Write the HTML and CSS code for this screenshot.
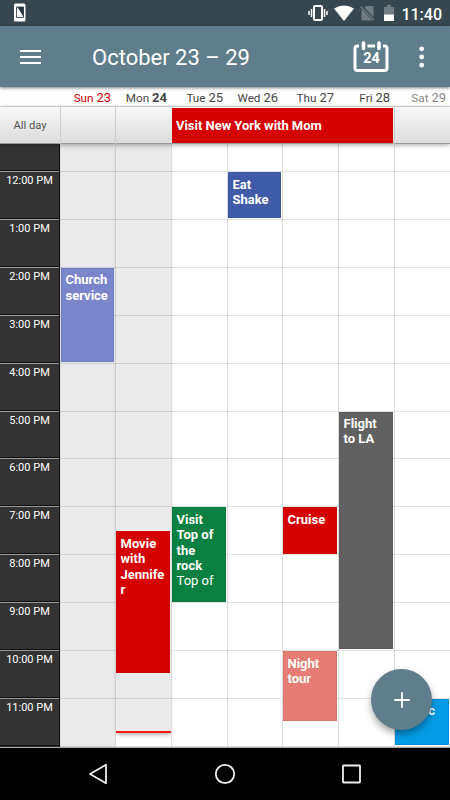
FILE: index.html
```html
<!DOCTYPE html>
<html lang="en">
<head>
    <meta charset="UTF-8">
    <meta name="viewport" content="width=device-width, initial-scale=1.0">
    <title>Calendar</title>
    <link rel="stylesheet" href="styles.css">
</head>
<body>
    <div class="screen">
        <div class="status-bar">
            <svg class="notification" width="14" height="20" viewBox="0 0 14 20">
                <rect x="1" y=".5" width="11.500" height="18" rx="1.500" fill="#fff"/>
                <rect x="3.500" y="4" width="7" height="10.500" fill="#fff" stroke="#26343b" stroke-width=".8"/>
                <path d="M4.500 4h6v10z" fill="#26343b"/>
            </svg>
            <div class="status-icons">
                <svg width="20" height="18" viewBox="0 0 20 18">
                    <rect x="6" y="2" width="8" height="14" rx="1" fill="none" stroke="#fff" stroke-width="2"/>
                    <path d="M3.500 5v8M1 7v4M16.500 5v8M19 7v4" stroke="#fff" stroke-width="1.500"/>
                </svg>
                <svg width="20" height="18" viewBox="0 0 20 18">
                    <path d="M0 4.500Q10 -1.500 20 4.500L10 17z" fill="#fff"/>
                </svg>
                <svg width="15" height="18" viewBox="0 0 15 18">
                    <path d="M6 2h7.500v11L4.500 3.500zM1.500 5L12.500 16.500H1.500z" fill="#727d83"/>
                    <path d="M.5 2.500L14 16" stroke="#727d83" stroke-width="1.300"/>
                </svg>
                <svg width="10" height="18" viewBox="0 0 10 18">
                    <path d="M0 3h3V1h4v2h3v8H0z" fill="#727d83"/>
                    <path d="M0 10.500h10V17H0z" fill="#fff"/>
                </svg>
            </div>
            <span class="clock">11:40</span>
        </div>

        <div class="app-bar">
            <svg class="menu" width="21" height="16" viewBox="0 0 21 16">
                <path d="M0 2h21M0 8h21M0 14h21" stroke="#fff" stroke-width="2.200"/>
            </svg>
            <h1>October 23 – 29</h1>
            <svg class="today" width="36" height="32" viewBox="0 0 36 32">
                <path d="M6 5H4.500Q2 5 2 7.500V27Q2 29.500 4.500 29.500H31.500Q34 29.500 34 27V7.500Q34 5 31.500 5H30" fill="none" stroke="#fff" stroke-width="3"/>
                <path d="M14.500 5h7.500" stroke="#fff" stroke-width="3"/>
                <path d="M10.500 2v5.500M26 2v5.500" stroke="#fff" stroke-width="3.600" stroke-linecap="round"/>
                <text x="18.500" y="21.500" text-anchor="middle" class="today-number">24</text>
            </svg>
            <svg class="more" width="6" height="22" viewBox="0 0 6 22" fill="#fff">
                <circle cx="2.700" cy="2.800" r="2.400"/>
                <circle cx="2.700" cy="11" r="2.400"/>
                <circle cx="2.700" cy="19.200" r="2.400"/>
            </svg>
        </div>

        <div class="week-header columns">
            <span></span>
            <span class="sunday">Sun <b>23</b></span>
            <span class="current">Mon <b>24</b></span>
            <span>Tue <b>25</b></span>
            <span>Wed <b>26</b></span>
            <span>Thu <b>27</b></span>
            <span>Fri <b>28</b></span>
            <span class="saturday">Sat <b>29</b></span>
        </div>

        <div class="all-day columns">
            <div class="all-day-label">All day</div>
            <div class="slot"></div>
            <div class="slot"></div>
            <div class="all-day-event">Visit New York with Mom</div>
            <div class="slot"></div>
        </div>

        <div class="week columns">
            <div class="hours">
                <div class="first"></div>
                <div>12:00 PM</div>
                <div>1:00 PM</div>
                <div>2:00 PM</div>
                <div>3:00 PM</div>
                <div>4:00 PM</div>
                <div>5:00 PM</div>
                <div>6:00 PM</div>
                <div>7:00 PM</div>
                <div>8:00 PM</div>
                <div>9:00 PM</div>
                <div>10:00 PM</div>
                <div>11:00 PM</div>
            </div>

            <div class="lines">
                <div class="first"></div>
                <div></div><div></div><div></div><div></div><div></div><div></div>
                <div></div><div></div><div></div><div></div><div></div><div></div>
            </div>

            <!-- one row per half hour, row 2 starts at noon -->
            <div class="day sun past">
                <div class="event church">Church service</div>
            </div>
            <div class="day mon">
                <div class="now"></div>
                <div class="event movie">Movie with Jennifer</div>
            </div>
            <div class="day tue">
                <div class="event rock">Visit Top of the rock <span>Top of</span></div>
            </div>
            <div class="day wed">
                <div class="event eat">Eat Shake</div>
            </div>
            <div class="day thu">
                <div class="event cruise">Cruise</div>
                <div class="event night">Night tour</div>
            </div>
            <div class="day fri">
                <div class="event flight">Flight to LA</div>
            </div>
            <div class="day sat">
                <div class="event music">Music</div>
            </div>
        </div>

        <div class="nav-bar">
            <svg width="22" height="22" viewBox="0 0 22 22"><path d="M19 1.800v18.400L3 11z"/></svg>
            <svg width="22" height="22" viewBox="0 0 22 22"><circle cx="11" cy="11" r="9.200"/></svg>
            <svg width="22" height="22" viewBox="0 0 22 22"><rect x="3" y="2.500" width="17" height="17" rx=".5"/></svg>
        </div>

        <button class="add" aria-label="Add event">
            <svg width="16" height="16" viewBox="0 0 16 16"><path d="M8 .3v15.400M.3 8h15.400" stroke="#fff" stroke-width="1.800"/></svg>
        </button>
    </div>
</body>
</html>
```
FILE: styles.css
```css
* {
    box-sizing: border-box;
}

body {
    margin: 0;
    font-family: Roboto, "Liberation Sans", sans-serif;
    background-color: #000;
}

.screen {
    position: relative;
    display: flex;
    flex-direction: column;
    width: 450px;
    height: 800px;
    overflow: hidden;
}

.screen > div {
    flex-shrink: 0;
}

svg {
    display: block;
}

.columns {
    display: grid;
    grid-template-columns: 60px 55px 56px 56px 55px 56px 56px 56px;
}

/* top bars */
.status-bar {
    display: flex;
    align-items: center;
    height: 26px;
    padding: 0 8px 0 13px;
    background-color: #37474f;
    color: #fff;
}

.status-icons {
    display: flex;
    gap: 6px;
    margin-left: auto;
}

.status-icons svg:nth-child(4) {
    margin-left: 3px;
}

.clock {
    margin: 2px 0 0 7px;
    font-size: 16px;
    font-weight: 500;
}

.app-bar {
    position: relative;
    z-index: 3;
    display: flex;
    align-items: center;
    height: 61px;
    padding: 0 25px 0 20px;
    background-color: #607d8b;
    box-shadow: 0 1px 3px rgba(0, 0, 0, 0.5);
}

h1 {
    margin: 2px auto 0 51px;
    font-size: 22px;
    font-weight: 400;
    color: #fff;
}

.today {
    margin-right: 30px;
}

.today-number {
    fill: #fff;
    font-size: 14.5px;
    font-weight: 700;
}

/* day names and all-day row */
.week-header {
    height: 20px;
    background-color: #fff;
    border-bottom: 1px solid #ddd;
    font-size: 11.7px;
    line-height: 21px;
    text-align: right;
    color: #444;
}

.week-header span {
    padding-right: 4px;
    white-space: nowrap;
}

.week-header b {
    font-size: 13px;
    font-weight: 400;
}

.week-header .sunday {
    color: #d50000;
}

.week-header .current b {
    font-weight: 700;
}

.week-header .saturday {
    color: #888;
}

.all-day {
    position: relative;
    z-index: 2;
    height: 37px;
    background: linear-gradient(#f8f8f8, #dcdcdc);
    border-bottom: 1px solid #999;
    box-shadow: 0 1px 5px rgba(0, 0, 0, 0.35);
}

.all-day-label {
    font-size: 11.2px;
    line-height: 37px;
    text-align: center;
    color: #555;
}

.slot {
    border-left: 1px solid #ccc;
}

.all-day-event {
    grid-column: span 4;
    margin: 1px 1px 2px 1px;
    padding-left: 4px;
    background-color: #d50000;
    font-size: 13px;
    font-weight: 700;
    line-height: 35px;
    letter-spacing: -0.03px;
    color: #fff;
}

/* week grid */
.week {
    grid-template-rows: 603px;
    background-color: #fff;
    border-bottom: 1px solid #aaa;
}

.hours {
    display: grid;
    grid-template-rows: 27px repeat(12, 47.917px);
    background-color: #333;
    border-right: 1px solid #111;
    font-size: 11px;
    line-height: 18px;
    text-align: center;
    color: #fff;
}

.hours div {
    border-top: 1px solid #999;
    border-bottom: 1px solid #111;
}

.hours .first {
    border-top: none;
}

.lines {
    z-index: 1;
    grid-column: 2 / 9;
    grid-row: 1;
    display: grid;
    grid-template-rows: 27px repeat(12, 47.917px);
}

.lines div {
    border-bottom: 1px solid rgba(0, 0, 0, 0.11);
    transform: translateY(1px);
}

.day {
    grid-row: 1;
    display: grid;
    grid-template-rows: 27px repeat(24, 23.958px);
    grid-template-columns: 100%;
    border-left: 1px solid #ddd;
}

.sun { grid-column: 2; }
.mon { grid-column: 3; }
.tue { grid-column: 4; }
.wed { grid-column: 5; }
.thu { grid-column: 6; }
.fri { grid-column: 7; }
.sat { grid-column: 8; }

.past {
    background-color: #eaeaea;
}

.now {
    grid-row: 1 / 26;
    grid-column: 1;
    height: 589px;
    background-color: #eaeaea;
    border-bottom: 2px solid #f81414;
    box-shadow: 0 3px 4px -1px rgba(0, 0, 0, 0.3);
}

.event {
    z-index: 2;
    grid-column: 1;
    margin: 1px 1px 0.6px 0;
    padding: 3.5px 4px 0 3.5px;
    border: 1px solid rgba(0, 0, 0, 0.06);
    overflow: hidden;
    overflow-wrap: anywhere;
    font-size: 13px;
    font-weight: 700;
    line-height: 15.4px;
    color: #fff;
}

.event span {
    font-weight: 400;
}

.church {
    grid-row: 6 / span 4;
    background-color: #7986cb;
}

.movie {
    grid-row: 17 / span 6;
    background-color: #d50000;
}

.rock {
    grid-row: 16 / span 4;
    background-color: #0b8043;
}

.eat {
    grid-row: 2 / span 2;
    background-color: #3f5ba9;
}

.cruise {
    grid-row: 16 / span 2;
    background-color: #d50000;
}

.night {
    grid-row: 22 / span 3;
    background-color: #e67c73;
}

.flight {
    grid-row: 12 / span 10;
    background-color: #616161;
}

.music {
    grid-row: 24 / span 2;
    background-color: #039be5;
}

/* bottom */
.nav-bar {
    display: flex;
    align-items: center;
    justify-content: space-between;
    height: 52px;
    padding: 0 88px 0 87px;
    background-color: #000;
}

.nav-bar svg {
    fill: none;
    stroke: #eee;
    stroke-width: 1.8;
    stroke-linejoin: round;
}

.add {
    position: absolute;
    z-index: 4;
    right: 18px;
    bottom: 70px;
    display: flex;
    align-items: center;
    justify-content: center;
    width: 61px;
    height: 61px;
    padding: 0;
    border: none;
    border-radius: 50%;
    background-color: #607d8b;
    box-shadow: 0 4px 7px rgba(0, 0, 0, 0.35);
}
```
